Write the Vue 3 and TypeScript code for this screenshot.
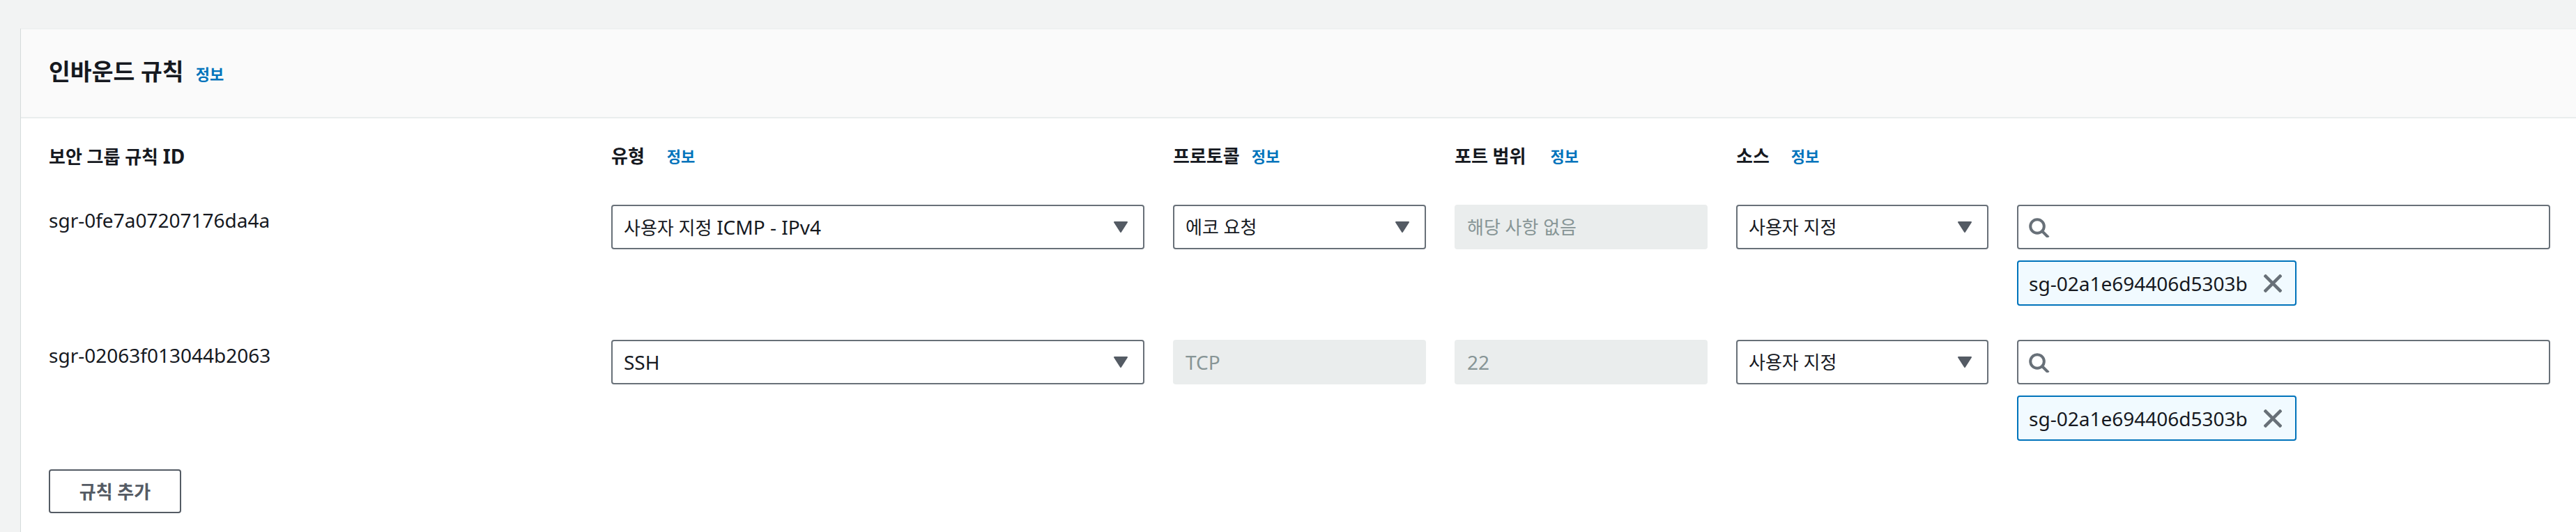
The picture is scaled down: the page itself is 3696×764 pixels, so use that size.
<template>
  <div class="page">
    <section class="card">
      <header class="card-head">
        <h2>인바운드 규칙</h2>
        <a class="info">정보</a>
      </header>

      <div class="card-body">
        <div class="rules">
          <div class="label">
            <span>보안 그룹 규칙 <span class="latin">ID</span></span>
          </div>
          <div class="label">유형<a class="info gap-type">정보</a></div>
          <div class="label">프로토콜<a class="info gap-proto">정보</a></div>
          <div class="label">포트 범위<a class="info gap-port">정보</a></div>
          <div class="label">소스<a class="info gap-source">정보</a></div>
          <div></div>

          <template v-for="rule in rules" :key="rule.id">
            <div class="rule-id latin">{{ rule.id }}</div>

            <div class="select">
              <span>
                <span v-for="part in runs(rule.type)" :key="part" :class="{ latin: isLatin(part) }">{{ part }}</span>
              </span>
              <svg class="caret" viewBox="0 0 20 16"><path d="M1 1h18l-9 14z" /></svg>
            </div>

            <div v-if="rule.protocol" class="select">
              <span>{{ rule.protocol }}</span>
              <svg class="caret" viewBox="0 0 20 16"><path d="M1 1h18l-9 14z" /></svg>
            </div>
            <div v-else class="disabled latin">{{ rule.protocolText }}</div>

            <div class="disabled" :class="{ latin: isLatin(rule.port) }">{{ rule.port }}</div>

            <div class="select">
              <span>사용자 지정</span>
              <svg class="caret" viewBox="0 0 20 16"><path d="M1 1h18l-9 14z" /></svg>
            </div>

            <div class="source">
              <div class="search">
                <svg class="search-icon" viewBox="0 0 30 30">
                  <circle cx="12" cy="14" r="9.8" />
                  <path d="M19 21l9 9" />
                </svg>
              </div>
              <div class="token">
                <span class="latin">{{ rule.group }}</span>
                <svg class="close" viewBox="0 0 26 26"><path d="M1 1l24 24M25 1L1 25" /></svg>
              </div>
            </div>
          </template>
        </div>

        <button class="add" type="button">규칙 추가</button>
      </div>
    </section>
  </div>
</template>

<script setup lang="ts">
interface Rule {
  id: string;
  type: string;
  protocol?: string;
  protocolText?: string;
  port: string;
  group: string;
}

const rules: Rule[] = [
  {
    id: "sgr-0fe7a07207176da4a",
    type: "사용자 지정 ICMP - IPv4",
    protocol: "에코 요청",
    port: "해당 사항 없음",
    group: "sg-02a1e694406d5303b",
  },
  {
    id: "sgr-02063f013044b2063",
    type: "SSH",
    protocolText: "TCP",
    port: "22",
    group: "sg-02a1e694406d5303b",
  },
];

// hangul runs are set smaller than latin ones
const runs = (text: string) => text.match(/[가-힣\s]+|[^가-힣]+/g) ?? [];
const isLatin = (text: string) => !/[가-힣]/.test(text);
</script>

<style scoped>
.page {
  height: 764px;
  box-sizing: border-box;
  padding: 41px 0 0 30px;
  background: #f2f3f3;
  overflow: hidden;
  font-family: "Noto Sans", "Noto Sans CJK KR", sans-serif;
  font-size: 26px;
  line-height: 40px;
  color: #16191f;
}

.latin {
  font-size: 28px;
}

.card {
  height: 723px;
  background: #fff;
  border-top: 1px solid #eaeded;
  box-shadow: -1px 0 0 #d5dbdb;
}

.card-head {
  display: flex;
  align-items: center;
  height: 128px;
  box-sizing: border-box;
  padding: 0 0 6px 40px;
  background: #fafafa;
  border-bottom: 2px solid #eaeded;
}

.card-head h2 {
  margin: 0;
  font-size: 33.5px;
  font-weight: 700;
  line-height: 44px;
}

.card-head .info {
  margin: 8px 0 0 17px;
}

.info {
  font-size: 22px;
  font-weight: 700;
  color: #0073bb;
}

.card-body {
  padding: 34px 0 0 40px;
}

.rules {
  display: grid;
  grid-template-columns: 766px 765px 363px 363px 362px 765px;
  column-gap: 41px;
  row-gap: 49px;
}

.rules > .label {
  margin-bottom: 1px;
}

.label {
  display: flex;
  align-items: center;
  height: 40px;
  font-weight: 700;
}

.gap-type {
  margin-left: 32px;
}

.gap-proto {
  margin-left: 17px;
}

.gap-port {
  margin-left: 35px;
}

.gap-source {
  margin-left: 31px;
}

.rule-id {
  line-height: 44px;
}

.select,
.disabled,
.search {
  display: flex;
  align-items: center;
  height: 64px;
  box-sizing: border-box;
  border-radius: 4px;
}

.select {
  justify-content: space-between;
  padding: 0 22px 0 16px;
  border: 2px solid #687078;
  background: #fff;
}

.caret {
  width: 20px;
  height: 16px;
  fill: #545b64;
  stroke: #545b64;
  stroke-width: 2;
  stroke-linejoin: round;
}

.disabled {
  padding: 0 18px;
  background: #eaeded;
  color: #879596;
}

.source {
  display: flex;
  flex-direction: column;
  align-items: flex-start;
  gap: 16px;
}

.search {
  width: 100%;
  padding-left: 15px;
  border: 2px solid #687078;
}

.search-icon {
  width: 30px;
  height: 30px;
  fill: none;
  stroke: #687078;
  stroke-width: 4;
}

.token {
  display: flex;
  align-items: center;
  justify-content: space-between;
  width: 401px;
  height: 65px;
  box-sizing: border-box;
  padding: 0 19px 0 15px;
  border: 2px solid #0073bb;
  border-radius: 4px;
  background: #f1faff;
}

.close {
  width: 26px;
  height: 26px;
  fill: none;
  stroke: #687078;
  stroke-width: 4.5;
}

.add {
  display: block;
  width: 190px;
  height: 63px;
  margin-top: 41px;
  padding: 0;
  border: 2px solid #545b64;
  border-radius: 4px;
  background: #fff;
  color: #545b64;
  font: inherit;
  font-weight: 700;
}
</style>
